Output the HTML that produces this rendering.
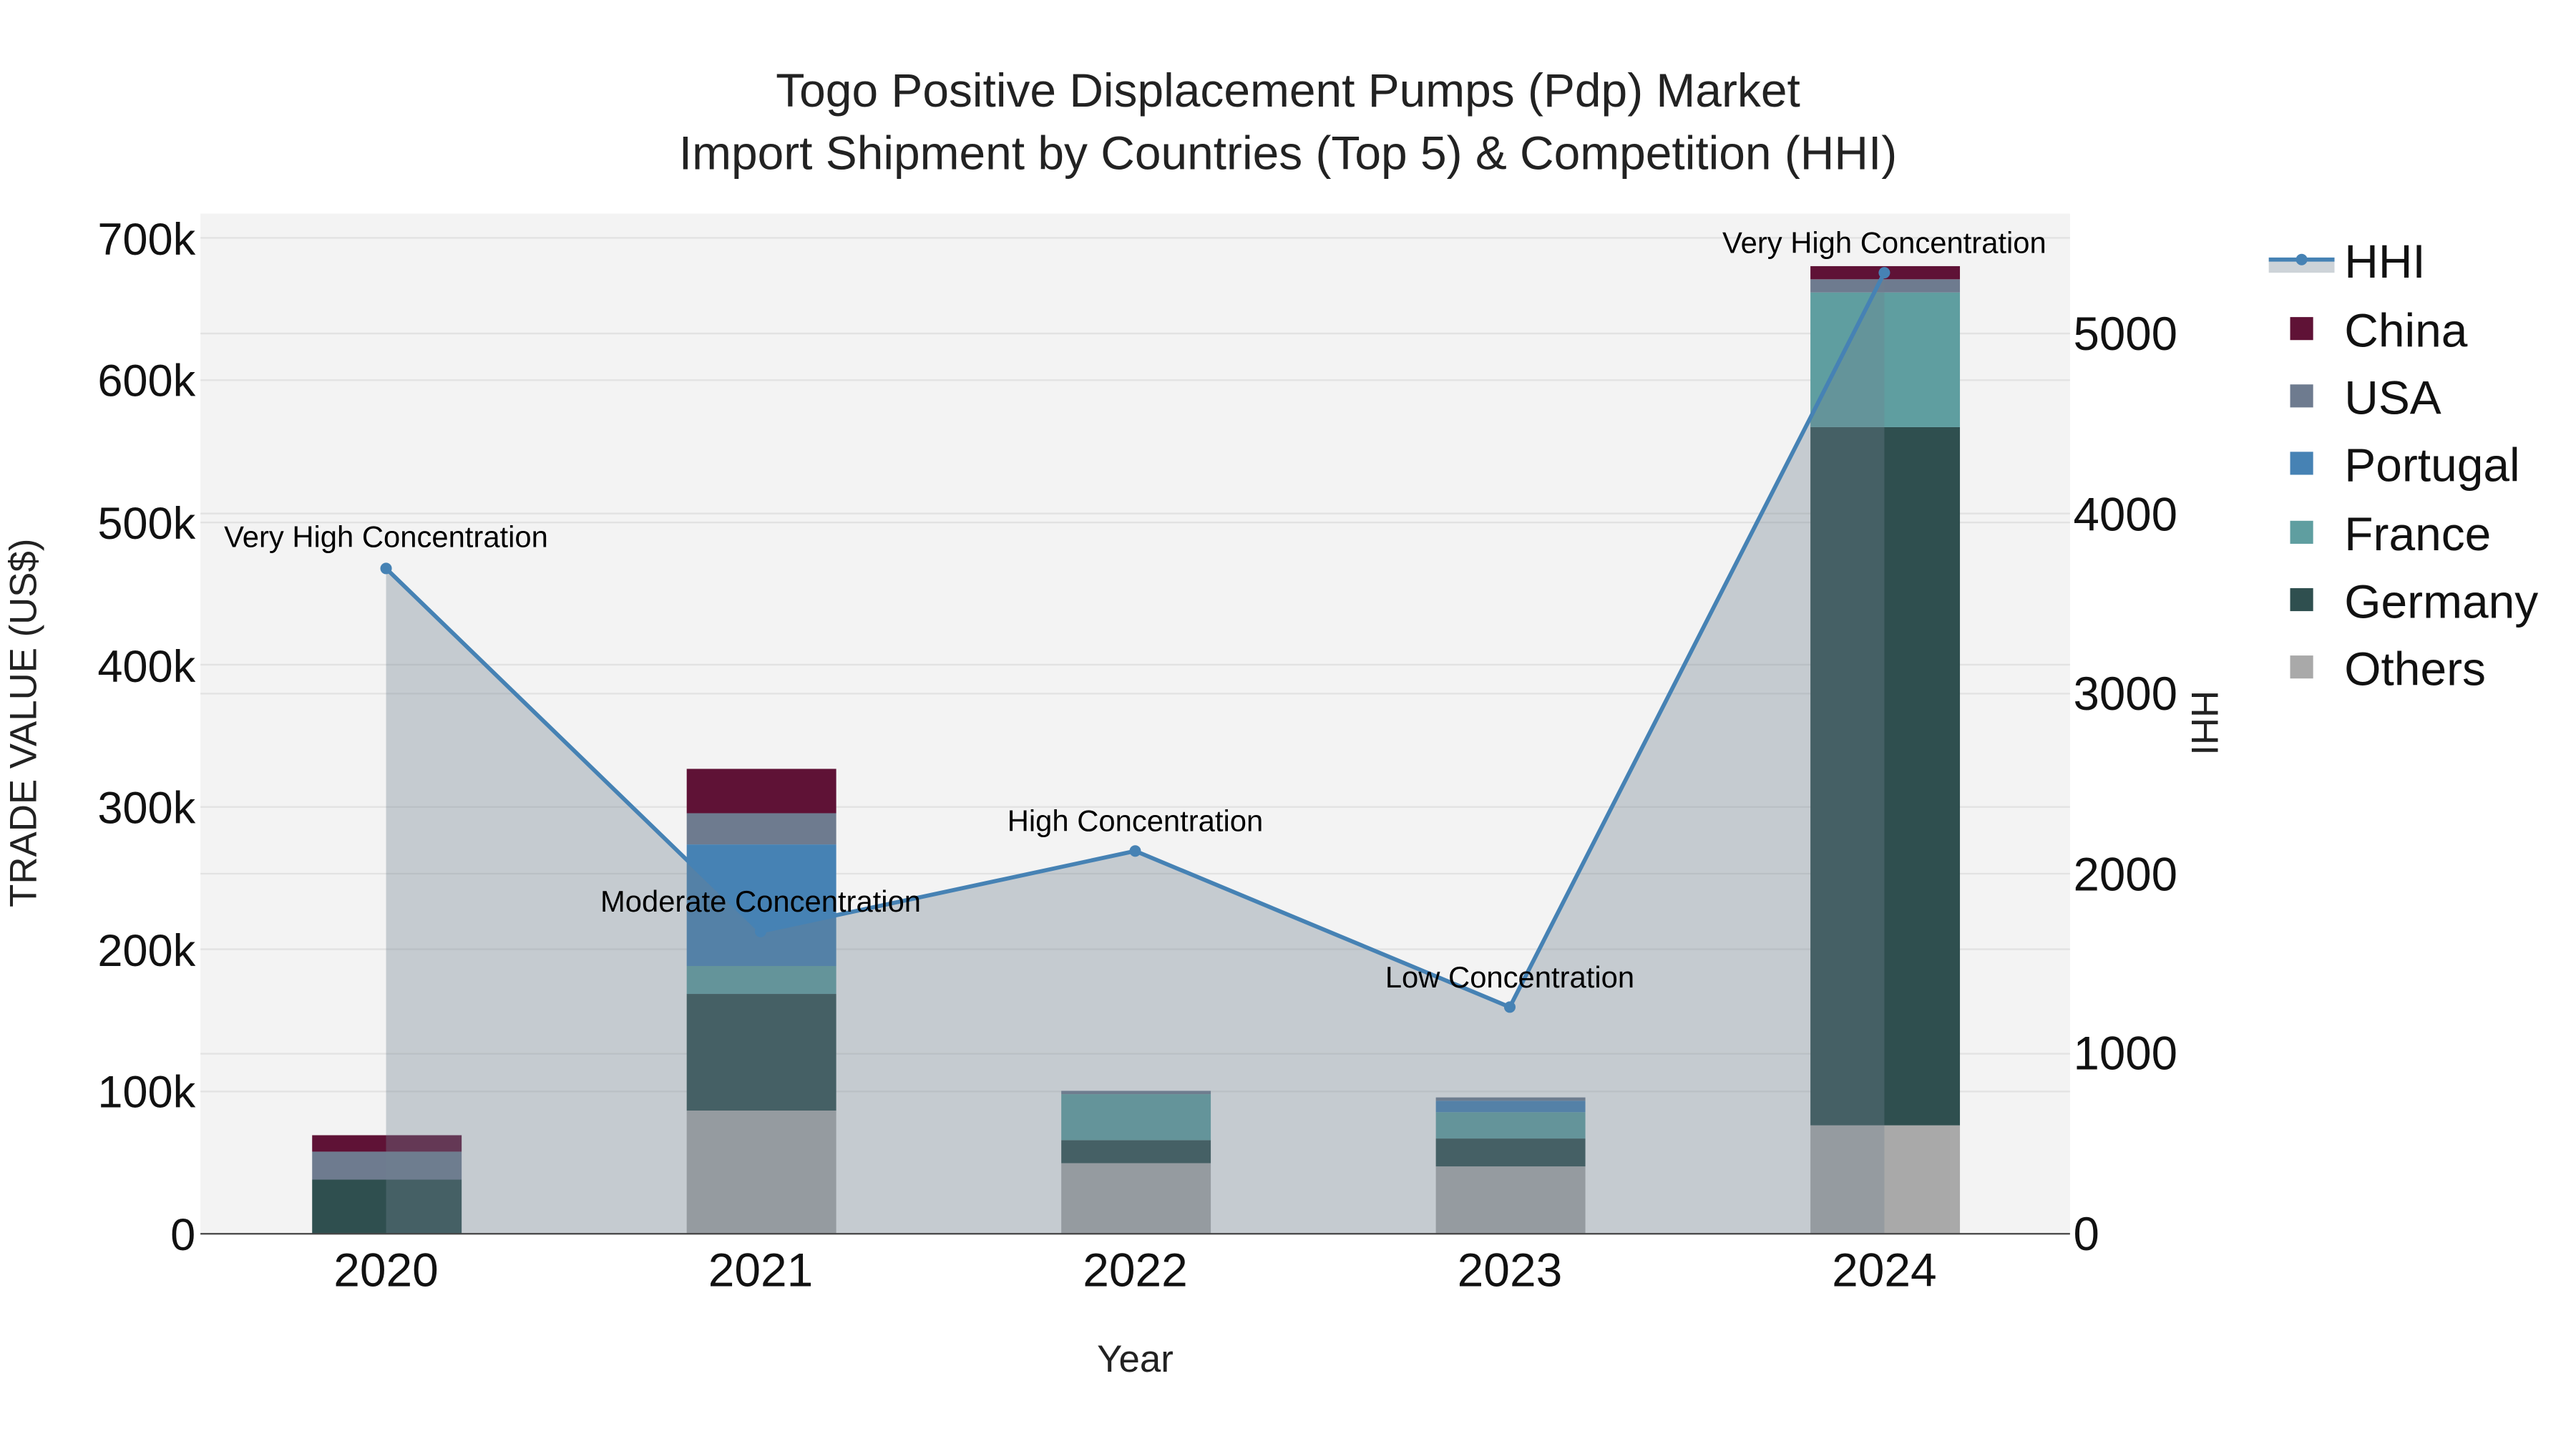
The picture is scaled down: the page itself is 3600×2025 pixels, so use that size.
<!DOCTYPE html>
<html><head><meta charset="utf-8"><style>html,body{margin:0;padding:0;background:#fff}svg{display:block}text{font-family:"Liberation Sans",sans-serif}</style></head>
<body>
<svg width="3600" height="2025" viewBox="0 0 1568 882" preserveAspectRatio="none" xmlns="http://www.w3.org/2000/svg">
<rect width="1568" height="882" fill="#fff"/>
<rect x="122" y="130" width="1138" height="621" fill="#f3f3f3"/>
<g stroke="#e2e2e2" stroke-width="1">
<line x1="122" x2="1260" y1="664.4" y2="664.4"/><line x1="122" x2="1260" y1="577.8" y2="577.8"/>
<line x1="122" x2="1260" y1="491.2" y2="491.2"/><line x1="122" x2="1260" y1="404.6" y2="404.6"/>
<line x1="122" x2="1260" y1="318" y2="318"/><line x1="122" x2="1260" y1="231.4" y2="231.4"/>
<line x1="122" x2="1260" y1="144.8" y2="144.8"/>
<line x1="122" x2="1260" y1="641.4" y2="641.4"/><line x1="122" x2="1260" y1="531.8" y2="531.8"/>
<line x1="122" x2="1260" y1="422.2" y2="422.2"/><line x1="122" x2="1260" y1="312.6" y2="312.6"/>
<line x1="122" x2="1260" y1="203" y2="203"/>
</g>
<g>
<rect x="190" y="718" width="91" height="33" fill="#2f4f4f"/>
<rect x="190" y="701" width="91" height="17" fill="#6e7b8f"/>
<rect x="190" y="691" width="91" height="10" fill="#5f1236"/>

<rect x="418" y="676" width="91" height="75" fill="#a9a9a9"/>
<rect x="418" y="605" width="91" height="71" fill="#2f4f4f"/>
<rect x="418" y="588" width="91" height="17" fill="#5f9ea0"/>
<rect x="418" y="514" width="91" height="74" fill="#4682b4"/>
<rect x="418" y="495" width="91" height="19" fill="#6e7b8f"/>
<rect x="418" y="468" width="91" height="27" fill="#5f1236"/>

<rect x="646" y="708" width="91" height="43" fill="#a9a9a9"/>
<rect x="646" y="694" width="91" height="14" fill="#2f4f4f"/>
<rect x="646" y="666" width="91" height="28" fill="#5f9ea0"/>
<rect x="646" y="664" width="91" height="2" fill="#6e7b8f"/>

<rect x="874" y="710" width="91" height="41" fill="#a9a9a9"/>
<rect x="874" y="693" width="91" height="17" fill="#2f4f4f"/>
<rect x="874" y="677" width="91" height="16" fill="#5f9ea0"/>
<rect x="874" y="670" width="91" height="7" fill="#4682b4"/>
<rect x="874" y="668" width="91" height="2" fill="#6e7b8f"/>

<rect x="1102" y="685" width="91" height="66" fill="#a9a9a9"/>
<rect x="1102" y="260" width="91" height="425" fill="#2f4f4f"/>
<rect x="1102" y="178" width="91" height="82" fill="#5f9ea0"/>
<rect x="1102" y="170" width="91" height="8" fill="#6e7b8f"/>
<rect x="1102" y="162" width="91" height="8" fill="#5f1236"/>
</g>
<polygon points="235,751 235,346 463,567 691,518 919,613 1147,166 1147,751" fill="#708090" fill-opacity="0.35"/>
<polyline points="235,346 463,567 691,518 919,613 1147,166" fill="none" stroke="#4682b4" stroke-width="2.5"/>
<g fill="#4682b4"><circle cx="235" cy="346" r="3.5"/><circle cx="463" cy="567" r="3.5"/><circle cx="691" cy="518" r="3.5"/><circle cx="919" cy="613" r="3.5"/><circle cx="1147" cy="166" r="3.5"/></g>
<line x1="122" x2="1260" y1="751" y2="751" stroke="#444" stroke-width="1"/>
<g font-size="18.2" text-anchor="middle" fill="#000">
<text x="235" y="333">Very High Concentration</text>
<text x="463" y="555">Moderate Concentration</text>
<text x="691" y="506">High Concentration</text>
<text x="919" y="601">Low Concentration</text>
<text x="1147" y="154">Very High Concentration</text>
</g>
<g font-size="28.7" text-anchor="middle" fill="#222">
<text x="784" y="65">Togo Positive Displacement Pumps (Pdp) Market</text>
<text x="784" y="103">Import Shipment by Countries (Top 5) &amp; Competition (HHI)</text>
</g>
<g font-size="27.5" text-anchor="end" fill="#111">
<text x="119" y="761">0</text><text x="119" y="674">100k</text><text x="119" y="588">200k</text>
<text x="119" y="501">300k</text><text x="119" y="415">400k</text><text x="119" y="328">500k</text>
<text x="119" y="241">600k</text><text x="119" y="155">700k</text>
</g>
<g font-size="28.5" fill="#111">
<text x="1262" y="761">0</text><text x="1262" y="651">1000</text><text x="1262" y="542">2000</text>
<text x="1262" y="432">3000</text><text x="1262" y="323">4000</text><text x="1262" y="213">5000</text>
</g>
<g font-size="28.7" text-anchor="middle" fill="#111">
<text x="235" y="783">2020</text><text x="463" y="783">2021</text><text x="691" y="783">2022</text>
<text x="919" y="783">2023</text><text x="1147" y="783">2024</text>
</g>
<text x="691" y="835" font-size="23" text-anchor="middle" fill="#222">Year</text>
<text transform="translate(22,440) rotate(-90)" font-size="23" text-anchor="middle" fill="#222">TRADE VALUE (US$)</text>
<text transform="translate(1334,440) rotate(90)" font-size="23" text-anchor="middle" fill="#222">HHI</text>
<rect x="1381" y="157" width="40" height="9" fill="#708090" fill-opacity="0.35"/>
<line x1="1381" x2="1421" y1="158" y2="158" stroke="#4682b4" stroke-width="2.5"/>
<circle cx="1401" cy="158" r="3.5" fill="#4682b4"/>
<rect x="1394" y="193" width="14" height="14" fill="#5f1236"/>
<rect x="1394" y="234" width="14" height="14" fill="#6e7b8f"/>
<rect x="1394" y="275" width="14" height="14" fill="#4682b4"/>
<rect x="1394" y="317" width="14" height="14" fill="#5f9ea0"/>
<rect x="1394" y="358" width="14" height="14" fill="#2f4f4f"/>
<rect x="1394" y="399" width="14" height="14" fill="#a9a9a9"/>
<g font-size="28.7" fill="#111">
<text x="1427" y="169">HHI</text><text x="1427" y="211">China</text><text x="1427" y="252">USA</text>
<text x="1427" y="293">Portugal</text><text x="1427" y="335">France</text><text x="1427" y="376">Germany</text>
<text x="1427" y="417">Others</text>
</g>
</svg>
</body></html>
